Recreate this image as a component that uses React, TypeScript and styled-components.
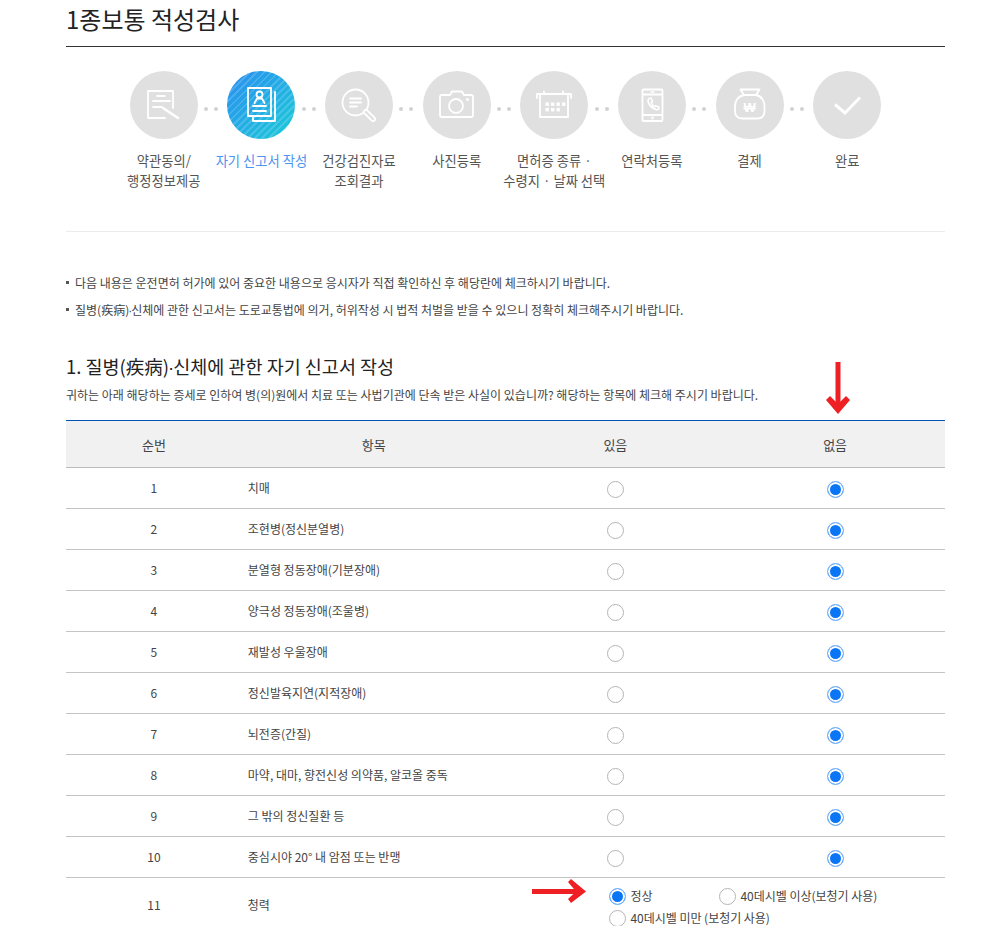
import styled, { createGlobalStyle } from "styled-components";
import { ReactNode } from "react";

const GlobalStyle = createGlobalStyle`
  html, body {
    margin: 0;
    padding: 0;
    background: #fff;
    overflow: hidden;
    height: 926px;
  }
  * {
    box-sizing: border-box;
  }
  body {
    font-family: "Noto Sans CJK KR", "Noto Sans", sans-serif;
    color: #555;
  }
`;

const Page = styled.main`
  width: 879px;
  margin-left: 66px;
`;

const Title = styled.h1`
  margin: 0;
  height: 47px;
  padding-top: 1px;
  border-bottom: 1px solid #333;
  font-size: 24px;
  line-height: 36px;
  font-weight: 400;
  color: #222;
`;

const Steps = styled.ol`
  list-style: none;
  margin: 0;
  padding: 24px 49px 40px;
  display: flex;
  border-bottom: 1px solid #ececec;
`;

const Step = styled.li<{ $last?: boolean }>`
  position: relative;
  flex: 1 1 0;
  min-width: 0;
  display: flex;
  flex-direction: column;
  align-items: center;

  &::after {
    content: "";
    display: ${(p) => (p.$last ? "none" : "block")};
    position: absolute;
    left: 89px;
    top: 36px;
    width: 4px;
    height: 4px;
    border-radius: 50%;
    background: #d2d2d2;
    box-shadow: 10px 0 0 #d2d2d2;
  }
`;

const Circle = styled.div<{ $active?: boolean }>`
  width: 68px;
  height: 68px;
  border-radius: 50%;
  background: ${(p) =>
    p.$active
      ? "repeating-linear-gradient(-45deg, rgba(255,255,255,0) 0 3px, rgba(255,255,255,.16) 3px 5px), linear-gradient(135deg, #2a8ef0, #1ccbd8)"
      : "#e0e0e0"};

  svg {
    display: block;
  }
`;

const StepLabel = styled.span<{ $active?: boolean }>`
  margin-top: 12px;
  width: 120px;
  text-align: center;
  font-size: 13.3px;
  line-height: 20px;
  white-space: pre-line;
  color: ${(p) => (p.$active ? "#4d94ee" : "#555")};
`;

const Notices = styled.ul`
  list-style: none;
  margin: 37px 0 0;
  padding: 0;
`;

const Notice = styled.li`
  position: relative;
  padding-left: 9px;
  font-size: 12px;
  line-height: 27px;
  color: #444;

  &::before {
    content: "";
    position: absolute;
    left: 0;
    top: 12px;
    width: 3px;
    height: 3px;
    background: #555;
  }
`;

const NarrowDot = styled.span`
  font-family: "Liberation Sans", sans-serif;
  line-height: 0;
  margin: 0 -1px;
`;

const SectionTitle = styled.h2`
  margin: 30px 0 0;
  font-size: 18.5px;
  line-height: 26px;
  font-weight: 400;
  color: #222;
`;

const SectionText = styled.p`
  margin: 6px 0 15px;
  font-size: 12px;
  line-height: 20px;
  color: #444;
`;

const Table = styled.table`
  width: 100%;
  table-layout: fixed;
  border-collapse: separate;
  border-spacing: 0;
  border-top: 1px solid #0054b8;
`;

const HeadCell = styled.th<{ $width: string }>`
  width: ${(p) => p.$width};
  height: 47px;
  padding: 0;
  background: #f1f1f1;
  border-bottom: 1px solid #bbb;
  font-size: 13px;
  font-weight: 400;
  color: #444;
  text-align: center;
`;

const Cell = styled.td<{ $center?: boolean }>`
  height: 41px;
  padding: ${(p) => (p.$center ? "0 0 2px" : "0 0 2px 6px")};
  border-bottom: 1px solid #c4c4c4;
  font-size: 12px;
  color: #444;
  text-align: ${(p) => (p.$center ? "center" : "left")};
  vertical-align: middle;
`;

const RadioCell = styled.td`
  height: 41px;
  padding: 0;
  border-bottom: 1px solid #c4c4c4;
  font-size: 12px;
  text-align: center;
  vertical-align: middle;
`;

const Radio = styled.input.attrs({ type: "radio" })`
  appearance: none;
  display: inline-block;
  flex: none;
  width: 17px;
  height: 17px;
  margin: 2px 0 0;
  border-radius: 50%;
  background: #fff;
  border: 1px solid #b5b5b5;
  vertical-align: middle;

  &:checked {
    border: 1px solid #7db5fb;
    box-shadow: inset 0 0 0 2px #fff;
    background: #0a75f5;
  }
`;

const HearingOptions = styled.div`
  display: grid;
  grid-template-columns: 110px auto;
  justify-content: start;
  padding: 8px 0 5px 104px;
  row-gap: 3px;
  text-align: left;
`;

const HearingOption = styled.label<{ $wide?: boolean }>`
  display: flex;
  align-items: center;
  gap: 4px;
  height: 19px;
  font-size: 12px;
  letter-spacing: -0.03px;
  color: #444;
  white-space: nowrap;
  grid-column: ${(p) => (p.$wide ? "1 / -1" : "auto")};
`;

const Arrow = styled.svg<{ $left: number; $top: number }>`
  position: absolute;
  left: ${(p) => p.$left}px;
  top: ${(p) => p.$top}px;
`;

const IconShell = ({ children }: { children: ReactNode }) => (
  <svg
    width="68"
    height="68"
    viewBox="0 0 68 68"
    fill="none"
    stroke="#fff"
    strokeWidth="1.8"
    strokeLinecap="round"
    strokeLinejoin="round"
  >
    {children}
  </svg>
);

const AgreeIcon = () => (
  <IconShell>
    <path d="M35 47H18V20H43V37" />
    <path d="M27 25H35M23 30H40M23 36H32" />
    <path d="M33 37L48 47" strokeWidth="2.6" />
  </IconShell>
);

const ReportIcon = () => (
  <IconShell>
    <path d="M44 45H21V17H44Z" />
    <path d="M48 21V50H26V46" />
    <circle cx="32.5" cy="23.5" r="3" />
    <path d="M27.5 32L30 27.5H35L37.5 32" />
    <path d="M26 35H39M26 40H39" />
  </IconShell>
);

const SearchIcon = () => (
  <IconShell>
    <circle cx="30.5" cy="31.5" r="13" />
    <path d="M25 27.5H36M25 31.5H36M25 35.5H32" />
    <path d="M41 41L48 48" strokeWidth="6" />
    <path d="M41 41L48 48" stroke="#e0e0e0" strokeWidth="2.4" />
  </IconShell>
);

const CameraIcon = () => (
  <IconShell>
    <path d="M19 24H27L29 20.5H39L41 24H48Q50 24 50 26V44Q50 46 48 46H19Q17 46 17 44V26Q17 24 19 24Z" />
    <circle cx="33" cy="35" r="7" />
    <circle cx="44.5" cy="28.5" r="0.6" />
  </IconShell>
);

const CalendarIcon = () => (
  <IconShell>
    <path d="M17 27V23H51V27M20 23V46H48V23" />
    <path d="M24 20.5V22M43 20.5V22" />
    <g fill="#fff" stroke="none">
      {[25.5, 31, 36.5, 42].map((x) => (
        <rect key={x} x={x} y="31.5" width="3.4" height="3.4" />
      ))}
      {[25.5, 31, 36.5].map((x) => (
        <rect key={x} x={x} y="37" width="3.4" height="3.4" />
      ))}
    </g>
  </IconShell>
);

const PhoneIcon = () => (
  <IconShell>
    <rect x="24.5" y="18.5" width="20" height="31.5" rx="1" />
    <path d="M25 23.5H44M25 44H44" />
    <path d="M33 21H36" strokeWidth="1.4" />
    <circle cx="34.5" cy="47" r="0.5" />
    <path
      d="M31 27.5L33 27L34.5 30.5L33.2 31.7Q34.3 34.5 36.5 35.8L37.8 34.6L41 36.2L40.4 38.3Q38.5 39.4 35.6 37.5Q30.8 34.6 30 30Q30 28.3 31 27.5Z"
      strokeWidth="1.6"
    />
  </IconShell>
);

const MoneyIcon = () => (
  <IconShell>
    <path d="M24.5 18.5H43.5L40 24H28Z" />
    <path d="M28 24H40Q48.5 26 48.5 36V40Q48.5 47.5 41 47.5H26.5Q19 47.5 19 40V36Q19 26 28 24Z" />
    <text
      x="33.7"
      y="41"
      fill="#fff"
      stroke="none"
      fontSize="13"
      fontWeight="700"
      textAnchor="middle"
      fontFamily="Liberation Sans, sans-serif"
    >
      ₩
    </text>
  </IconShell>
);

const CheckIcon = () => (
  <IconShell>
    <path d="M22 33.5L32 42L47 26.5" strokeWidth="3" strokeLinecap="butt" strokeLinejoin="miter" />
  </IconShell>
);

const steps = [
  { label: "약관동의/\n행정정보제공", icon: <AgreeIcon /> },
  { label: "자기 신고서 작성", icon: <ReportIcon />, active: true },
  { label: "건강검진자료\n조회결과", icon: <SearchIcon /> },
  { label: "사진등록", icon: <CameraIcon /> },
  { label: "면허증 종류 ·\n수령지 · 날짜 선택", icon: <CalendarIcon /> },
  { label: "연락처등록", icon: <PhoneIcon /> },
  { label: "결제", icon: <MoneyIcon /> },
  { label: "완료", icon: <CheckIcon /> },
];

const items = [
  "치매",
  "조현병(정신분열병)",
  "분열형 정동장애(기분장애)",
  "양극성 정동장애(조울병)",
  "재발성 우울장애",
  "정신발육지연(지적장애)",
  "뇌전증(간질)",
  "마약, 대마, 향전신성 의약품, 알코올 중독",
  "그 밖의 정신질환 등",
  "중심시야 20° 내 암점 또는 반맹",
];

export default function App() {
  return (
    <>
      <GlobalStyle />
      <Page>
        <Title>1종보통 적성검사</Title>
        <Steps>
          {steps.map((step, i) => (
            <Step key={step.label} $last={i === steps.length - 1}>
              <Circle $active={step.active}>{step.icon}</Circle>
              <StepLabel $active={step.active}>{step.label}</StepLabel>
            </Step>
          ))}
        </Steps>
        <Notices>
          <Notice>
            다음 내용은 운전면허 허가에 있어 중요한 내용으로 응시자가 직접 확인하신 후 해당란에 체크하시기 바랍니다.
          </Notice>
          <Notice>
            질병(疾病)<NarrowDot>·</NarrowDot>신체에 관한 신고서는 도로교통법에 의거, 허위작성 시 법적 처벌을 받을 수 있으니 정확히 체크해주시기 바랍니다.
          </Notice>
        </Notices>
        <SectionTitle>
          1. 질병(疾病)<NarrowDot>·</NarrowDot>신체에 관한 자기 신고서 작성
        </SectionTitle>
        <SectionText>
          귀하는 아래 해당하는 증세로 인하여 병(의)원에서 치료 또는 사법기관에 단속 받은 사실이 있습니까? 해당하는 항목에 체크해 주시기 바랍니다.
        </SectionText>
        <Table>
          <thead>
            <tr>
              <HeadCell $width="20%">순번</HeadCell>
              <HeadCell $width="30%">항목</HeadCell>
              <HeadCell $width="25%">있음</HeadCell>
              <HeadCell $width="25%">없음</HeadCell>
            </tr>
          </thead>
          <tbody>
            {items.map((item, i) => (
              <tr key={item}>
                <Cell $center>{i + 1}</Cell>
                <Cell>{item}</Cell>
                <RadioCell>
                  <Radio name={`q${i}`} />
                </RadioCell>
                <RadioCell>
                  <Radio name={`q${i}`} defaultChecked />
                </RadioCell>
              </tr>
            ))}
            <tr>
              <Cell $center>11</Cell>
              <Cell>청력</Cell>
              <RadioCell colSpan={2}>
                <HearingOptions>
                  <HearingOption>
                    <Radio name="hearing" defaultChecked />
                    정상
                  </HearingOption>
                  <HearingOption>
                    <Radio name="hearing" />
                    40데시벨 이상(보청기 사용)
                  </HearingOption>
                  <HearingOption $wide>
                    <Radio name="hearing" />
                    40데시벨 미만 (보청기 사용)
                  </HearingOption>
                </HearingOptions>
              </RadioCell>
            </tr>
          </tbody>
        </Table>
      </Page>
      <Arrow $left={825} $top={362} width="26" height="53" viewBox="0 0 26 53">
        <path d="M13 0V46" stroke="#ee2024" strokeWidth="5" fill="none" />
        <path d="M1 38L5 34L13 42L21 34L25 38L13 52Z" fill="#ee2024" />
      </Arrow>
      <Arrow $left={532} $top={879} width="54" height="25" viewBox="0 0 54 25">
        <path d="M0 12.5H46" stroke="#ee2024" strokeWidth="5" fill="none" />
        <path d="M36 3L39 0L54 12.5L39 24L36 20L44 12.5Z" fill="#ee2024" />
      </Arrow>
    </>
  );
}
